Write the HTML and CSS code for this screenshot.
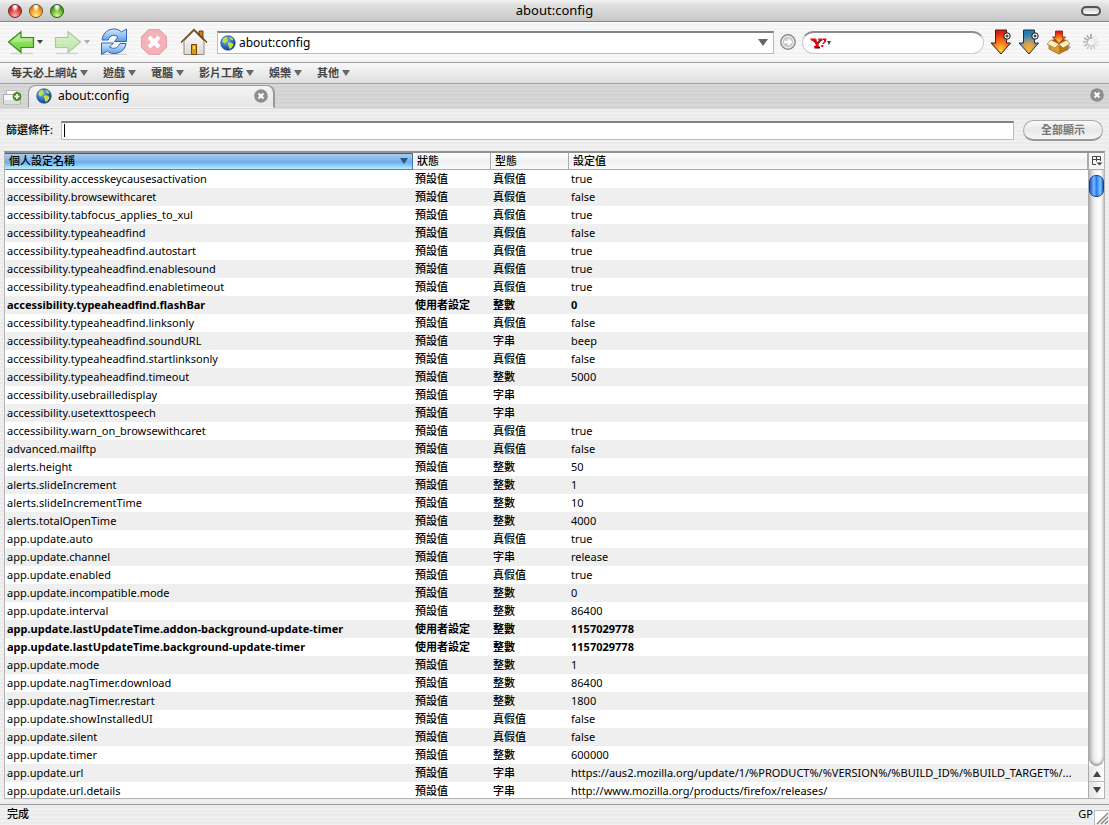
FILE: index.html
```html
<!DOCTYPE html>
<html lang="zh-Hant">
<head>
<meta charset="utf-8">
<title>about:config</title>
<link rel="stylesheet" href="styles.css">
</head>
<body>
<svg width="0" height="0" class="defs" aria-hidden="true">
  <defs>
    <radialGradient id="sea" cx=".35" cy=".3" r=".8"><stop offset="0" stop-color="#8cbcf0"/><stop offset=".5" stop-color="#2f74c8"/><stop offset="1" stop-color="#0a2f78"/></radialGradient>
    <linearGradient id="green" x2="0" y2="1"><stop offset="0" stop-color="#b2f084"/><stop offset="1" stop-color="#68d038"/></linearGradient>
    <linearGradient id="blue" x2="0" y2="1"><stop offset="0" stop-color="#d4ebfc"/><stop offset="1" stop-color="#5a9be8"/></linearGradient>
    <radialGradient id="fire" cx=".5" cy=".85" r=".75"><stop offset="0" stop-color="#ffd43c"/><stop offset=".5" stop-color="#f8741c"/><stop offset="1" stop-color="#d81f10"/></radialGradient>
    <radialGradient id="ice" cx=".5" cy=".85" r=".75"><stop offset="0" stop-color="#ffb52c"/><stop offset=".4" stop-color="#d8a050"/><stop offset=".8" stop-color="#3b86b4"/><stop offset="1" stop-color="#2878ac"/></radialGradient>
    <linearGradient id="wall" x2="0" y2="1"><stop offset="0" stop-color="#fff"/><stop offset="1" stop-color="#ddd8d2"/></linearGradient>
    <symbol id="globe" viewBox="0 0 16 16">
      <circle cx="8" cy="8" r="7.300" fill="url(#sea)" stroke="#2a5690" stroke-width=".7"/>
      <path d="M3 3.500 5.500 2l2 .5L7 4.500 8 6 6 7 5 8.500 2.500 7zM9 2l3 .8 1.500 2.200-1.500.5-1.500-1zM7.500 8l2.500-.8 3 1.300.5 1.500-2 3-2 1-1-3z" fill="#bfe23c"/>
    </symbol>
    <symbol id="close" viewBox="0 0 14 14"><circle cx="7" cy="7" r="6.800" fill="#8e8e8e"/><path d="M4.500 4.500l5 5m0-5l-5 5" stroke="#fff" stroke-width="2"/></symbol>
    <symbol id="plus" viewBox="0 0 8 8"><circle cx="4" cy="4" r="3.200" fill="#fff" stroke="#111"/><path d="M4 2.500v3M2.500 4h3" stroke="#111"/></symbol>
  </defs>
</svg>

<header class="titlebar">
  <div class="lights"><button class="light red" aria-label="Close"></button><button class="light amber" aria-label="Minimize"></button><button class="light lime" aria-label="Zoom"></button></div>
  <h1>about:config</h1>
  <button class="pill" aria-label="Toggle toolbar"></button>
</header>

<nav class="toolbar">
  <button class="tool back" aria-label="Back"><svg width="28" height="26" viewBox="0 0 28 26"><path d="M4 24.500h22" stroke="#d4d4d4" stroke-width="1.500"/><path d="M1.500 13 14 2.700v5.800h12.500v10H14v5z" fill="url(#green)" stroke="#3a8c1c" stroke-width="1.200"/><path d="M4 13l9-7.500v4h12v3z" fill="#fff" opacity=".25"/></svg><i class="tri small"></i></button>
  <button class="tool forward" aria-label="Forward"><svg width="28" height="26" viewBox="0 0 28 26"><path d="M2 24.500h22" stroke="#aaa" stroke-width="1.500"/><path d="M26.500 13 14 2.700v5.800H1.500v10H14v5z" fill="url(#green)" stroke="#3a8c1c" stroke-width="1.200"/></svg><i class="tri small"></i></button>
  <button class="tool reload" aria-label="Reload"><svg width="28" height="28" viewBox="0 0 28 28"><path d="M2 26.500h25" stroke="#ccc"/><path d="M2 12C3 4 9 1 14 1c3 0 5.500 1 7.500 3L26.500 1v12.500H14.500L18 9c-4-3-8-2-10 3z" fill="url(#blue)" stroke="#2f66b4"/><path d="M26 15.500c-1 7-6.500 10-12 10-3 0-5-1-6.500-2.500L1.500 26.500V15H13.500L9.500 19c4 2.500 8 1.500 10.500-3.500z" fill="url(#blue)" stroke="#2f66b4"/></svg></button>
  <button class="tool stop" aria-label="Stop"><svg width="28" height="28" viewBox="0 0 28 28"><path d="M9 1.500h10l7.500 7.500v10L19 26.500H9L1.500 19V9z" fill="#f5b2b6" stroke="#e8a4aa" stroke-width="1.200"/><path d="M9 9l10 10M19 9 9 19" stroke="#fff" stroke-width="4"/></svg></button>
  <button class="tool home" aria-label="Home"><svg width="28" height="28" viewBox="0 0 28 28"><path d="M19 3h4v9l-4-4z" fill="#c98a13" stroke="#6b3d08"/><path d="M4 13 14 3l10 10v13.500H4z" fill="url(#wall)" stroke="#94877a"/><path d="M1 14.500 14 1.500l13 13" fill="none" stroke="#6b4210" stroke-width="1.300"/><path d="M11.500 26.500v-10h5v10z" fill="#d99a20" stroke="#754406"/><path d="M13 18h2v3h-2z" fill="#ffe13c"/></svg></button>
  <div class="field address"><svg width="16" height="16"><use href="#globe"/></svg><input type="text" value="about:config" aria-label="Address"><button class="drop" aria-label="History"><i class="tri large"></i></button></div>
  <button class="tool go" aria-label="Go"><svg width="16" height="16" viewBox="0 0 16 16"><circle cx="8" cy="8" r="7.300" fill="#ccc" stroke="#858585" stroke-width="1.200"/><circle cx="8" cy="8" r="5.800" fill="none" stroke="#eee"/><path d="M4 6.700h4V4.200L12.500 8 8 11.800V9.300H4z" fill="#fff"/></svg></button>
  <div class="search">
    <button class="engine" aria-label="Yahoo"><svg width="17" height="12" viewBox="0 0 17 12"><path d="M1 2.500h6v1H5.700L8 5.800 10 3.500H8.500v-1h4v1h-1L8.500 7v3H10v1.500H4.500V10H6V7L2.500 3.500H1z" fill="#500"/><path d="M0 1.500h6v1H4.800L7.300 5 9.500 2.500H8v-1h4v1h-1L8 6v3h1.500v1H4V9h1.500V6L1.500 2.500H0z" fill="#f00012"/><path d="M11 4l2-2.500h3.500L16 4.500 13.500 7h-1.300L14 4.500V3h-1.500zM11.500 8h2l-.5 2h-2z" fill="#e80012"/></svg><i class="tri tiny"></i></button>
    <input type="text" aria-label="Search">
  </div>
  <div class="extras">
    <button class="tool" aria-label="Download"><svg width="22" height="26" viewBox="0 0 22 26"><path d="M5.500 1h11v13h4L11 25 1 14h4.500z" fill="url(#fire)" stroke="#4a1610"/><use href="#plus" x="13" y="3" width="8" height="8"/></svg></button>
    <button class="tool" aria-label="Download all"><svg width="22" height="26" viewBox="0 0 22 26"><path d="M5.500 1h11v13h4L11 25 1 14h4.500z" fill="url(#ice)" stroke="#103448"/><use href="#plus" x="13" y="3" width="8" height="8"/></svg></button>
    <button class="tool" aria-label="Downloads"><svg width="26" height="26" viewBox="0 0 26 26"><path d="M8 24l13-2 4-4-4-3z" fill="#aaa"/><path d="M3 14l10 3 9-3v6l-9 5-10-5z" fill="#dc9b32" stroke="#946018" stroke-width=".8"/><path d="M13 17l9-3v6l-9 5z" fill="#b97618"/><path d="M5 11l8-2 8 2-8 4z" fill="#8e581a"/><path d="M5 11l8 4-4 4-8-4zM21 11l-8 4 4 4 7-4z" fill="#fff0bd" stroke="#a8752e" stroke-width=".7"/><path d="M9.500 2h7v6h3L13 14.500 6.500 8h3z" fill="url(#fire)" stroke="#8a1a0a" stroke-width=".8"/></svg></button>
    <svg class="throbber" width="16" height="16" viewBox="0 0 16 16" stroke-width="1.500" stroke="#999"><path d="M8 0v5"/><path d="M4 1.100l2.500 4.300M1.100 4l4.300 2.500" stroke="#aaa"/><path d="M0 8h5M1.100 12l4.300-2.500" stroke="#b8b8b8"/><path d="M4 14.900l2.500-4.300M8 16v-5M12 14.900 9.500 10.600" stroke="#c8c8c8"/><path d="M14.900 12l-4.300-2.500M16 8h-5" stroke="#dedede"/><path d="M14.900 4l-4.300 2.500M12 1.100 9.500 5.400" stroke="#e6e6e6"/></svg>
  </div>
</nav>

<nav class="bookmarks">
  <button>每天必上網站<i class="tri"></i></button><button>遊戲<i class="tri"></i></button><button>電腦<i class="tri"></i></button><button>影片工廠<i class="tri"></i></button><button>娛樂<i class="tri"></i></button><button>其他<i class="tri"></i></button>
</nav>

<div class="tabs">
  <button class="newtab" aria-label="New tab"><svg width="20" height="17" viewBox="0 0 20 17"><path d="M3.500 6V2.500h10V6" fill="#fff" stroke="#bbb"/><path d="M.5 16V6.500h17V16z" fill="#f6f6f6" stroke="#aaa"/><path d="M1 12h16v4H1z" fill="#ddd"/><circle cx="14" cy="8.500" r="4" fill="#4d9c28" stroke="#2d6a16" stroke-width=".7"/><path d="M14 6v5M11.500 8.500h5" stroke="#fff" stroke-width="1.500"/></svg></button>
  <div class="tab"><svg width="16" height="16"><use href="#globe"/></svg><span>about:config</span><button aria-label="Close tab"><svg width="14" height="14"><use href="#close"/></svg></button></div>
  <button class="closeall" aria-label="Close"><svg width="14" height="14"><use href="#close"/></svg></button>
</div>

<main class="config">
  <form class="filter">
    <label for="filter">篩選條件:</label>
    <div class="field filterbox"><i class="caret"></i><input id="filter" type="text"></div>
    <button type="button" class="showall">全部顯示</button>
  </form>
  <div class="tree">
    <div class="rows">
    <table>
      <colgroup><col class="name"><col class="short"><col class="short"><col></colgroup>
      <thead><tr><th class="sorted"><span>個人設定名稱<i class="tri"></i></span></th><th>狀態</th><th>型態</th><th>設定值</th></tr></thead>
      <tbody>
        <tr><td>accessibility.accesskeycausesactivation</td><td>預設值</td><td>真假值</td><td>true</td></tr>
        <tr><td>accessibility.browsewithcaret</td><td>預設值</td><td>真假值</td><td>false</td></tr>
        <tr><td>accessibility.tabfocus_applies_to_xul</td><td>預設值</td><td>真假值</td><td>true</td></tr>
        <tr><td>accessibility.typeaheadfind</td><td>預設值</td><td>真假值</td><td>false</td></tr>
        <tr><td>accessibility.typeaheadfind.autostart</td><td>預設值</td><td>真假值</td><td>true</td></tr>
        <tr><td>accessibility.typeaheadfind.enablesound</td><td>預設值</td><td>真假值</td><td>true</td></tr>
        <tr><td>accessibility.typeaheadfind.enabletimeout</td><td>預設值</td><td>真假值</td><td>true</td></tr>
        <tr class="user"><td>accessibility.typeaheadfind.flashBar</td><td>使用者設定</td><td>整數</td><td>0</td></tr>
        <tr><td>accessibility.typeaheadfind.linksonly</td><td>預設值</td><td>真假值</td><td>false</td></tr>
        <tr><td>accessibility.typeaheadfind.soundURL</td><td>預設值</td><td>字串</td><td>beep</td></tr>
        <tr><td>accessibility.typeaheadfind.startlinksonly</td><td>預設值</td><td>真假值</td><td>false</td></tr>
        <tr><td>accessibility.typeaheadfind.timeout</td><td>預設值</td><td>整數</td><td>5000</td></tr>
        <tr><td>accessibility.usebrailledisplay</td><td>預設值</td><td>字串</td><td></td></tr>
        <tr><td>accessibility.usetexttospeech</td><td>預設值</td><td>字串</td><td></td></tr>
        <tr><td>accessibility.warn_on_browsewithcaret</td><td>預設值</td><td>真假值</td><td>true</td></tr>
        <tr><td>advanced.mailftp</td><td>預設值</td><td>真假值</td><td>false</td></tr>
        <tr><td>alerts.height</td><td>預設值</td><td>整數</td><td>50</td></tr>
        <tr><td>alerts.slideIncrement</td><td>預設值</td><td>整數</td><td>1</td></tr>
        <tr><td>alerts.slideIncrementTime</td><td>預設值</td><td>整數</td><td>10</td></tr>
        <tr><td>alerts.totalOpenTime</td><td>預設值</td><td>整數</td><td>4000</td></tr>
        <tr><td>app.update.auto</td><td>預設值</td><td>真假值</td><td>true</td></tr>
        <tr><td>app.update.channel</td><td>預設值</td><td>字串</td><td>release</td></tr>
        <tr><td>app.update.enabled</td><td>預設值</td><td>真假值</td><td>true</td></tr>
        <tr><td>app.update.incompatible.mode</td><td>預設值</td><td>整數</td><td>0</td></tr>
        <tr><td>app.update.interval</td><td>預設值</td><td>整數</td><td>86400</td></tr>
        <tr class="user"><td>app.update.lastUpdateTime.addon-background-update-timer</td><td>使用者設定</td><td>整數</td><td>1157029778</td></tr>
        <tr class="user"><td>app.update.lastUpdateTime.background-update-timer</td><td>使用者設定</td><td>整數</td><td>1157029778</td></tr>
        <tr><td>app.update.mode</td><td>預設值</td><td>整數</td><td>1</td></tr>
        <tr><td>app.update.nagTimer.download</td><td>預設值</td><td>整數</td><td>86400</td></tr>
        <tr><td>app.update.nagTimer.restart</td><td>預設值</td><td>整數</td><td>1800</td></tr>
        <tr><td>app.update.showInstalledUI</td><td>預設值</td><td>真假值</td><td>false</td></tr>
        <tr><td>app.update.silent</td><td>預設值</td><td>真假值</td><td>false</td></tr>
        <tr><td>app.update.timer</td><td>預設值</td><td>整數</td><td>600000</td></tr>
        <tr><td>app.update.url</td><td>預設值</td><td>字串</td><td>https://aus2.mozilla.org/update/1/%PRODUCT%/%VERSION%/%BUILD_ID%/%BUILD_TARGET%/...</td></tr>
        <tr><td>app.update.url.details</td><td>預設值</td><td>字串</td><td>http://www.mozilla.org/products/firefox/releases/</td></tr>
      </tbody>
    </table>
    </div>
    <div class="side">
      <button class="picker" aria-label="Choose columns"><svg width="12" height="12" viewBox="0 0 12 12"><path d="M5 9.500H1.500v-8h8V6M1.500 4.500h8M5.500 1.500v5" fill="none" stroke="#444"/><path d="M5.500 7.500h6l-3 3z" fill="#444"/></svg></button>
      <div class="track"><div class="thumb"></div></div>
      <button class="arrow" aria-label="Scroll up"><i class="tri up"></i></button>
      <button class="arrow" aria-label="Scroll down"><i class="tri down"></i></button>
    </div>
  </div>
</main>

<footer class="status"><span>完成</span><span class="gp">GP</span><svg width="15" height="15" viewBox="0 0 15 15"><path d="M.5 15V.5H15" fill="#fff" stroke="#bbb"/><path d="M3 14 14 3M7 14l7-7M11 14l3-3" stroke="#888" stroke-width="1.300"/></svg></footer>
</body>
</html>
```
FILE: styles.css
```css
* { box-sizing: border-box; }

body {
  margin: 0;
  height: 100vh;
  display: flex;
  flex-direction: column;
  overflow: hidden;
  font: 11px/18px "Noto Sans", "Noto Sans CJK TC", sans-serif;
  color: #000;
  background: repeating-linear-gradient(#f0f0f0 0 2px, #ebebeb 2px 4px);
}

button {
  margin: 0;
  padding: 0;
  border: 0;
  background: none;
  font: inherit;
  color: inherit;
  display: flex;
  align-items: center;
}

input {
  flex: 1;
  min-width: 0;
  padding: 0;
  border: 0;
  outline: 0;
  background: none;
  font: inherit;
}

svg { display: block; flex: none; }
.defs { position: absolute; }

.tri {
  flex: none;
  border: 4px solid transparent;
  border-top: 6px solid #666;
  border-bottom: 0;
}
.tri.small { border-width: 4px 3px 0; border-top-color: #444; }
.tri.tiny { border-width: 4px 2px 0; border-top-color: #444; }
.tri.large { border-width: 7px 5px 0; }
.tri.down { border-top-color: #444; }
.tri.up { border-top: 0; border-bottom: 6px solid #444; }

.titlebar {
  flex: none;
  height: 22px;
  padding: 0 8px;
  display: grid;
  grid-template-columns: 1fr auto 1fr;
  align-items: center;
  border-bottom: 1px solid #888;
  border-radius: 6px 6px 0 0;
  background: linear-gradient(#f2f2f2, #e2e2e2 20%, #c6c6c6);
}
.titlebar h1 { margin: 0; padding-bottom: 2px; font-size: 13px; line-height: 18px; font-weight: 400; }
.lights { display: flex; gap: 7px; }
.light {
  width: 14px;
  height: 14px;
  border-radius: 50%;
  border: 1px solid #444;
}
.red { border-color: #6e2420; background: radial-gradient(ellipse at 50% 10%, #fff 0 12%, transparent 40%), radial-gradient(circle at 50% 90%, #ffb8ac, #d8403c 50%, #93201c); }
.amber { border-color: #84501c; background: radial-gradient(ellipse at 50% 10%, #fff 0 12%, transparent 40%), radial-gradient(circle at 50% 90%, #fff090, #f5a128 50%, #a85c10); }
.lime { border-color: #2c5818; background: radial-gradient(ellipse at 50% 10%, #fff 0 12%, transparent 40%), radial-gradient(circle at 50% 90%, #d4ff98, #66b52c 50%, #2a6c10); }
.pill {
  justify-self: end;
  width: 20px;
  height: 10px;
  border: 2px solid #555;
  border-radius: 5px;
  background: linear-gradient(#ccc, #fff);
}

.toolbar {
  flex: none;
  height: 41px;
  padding: 0 10px 0 7px;
  display: flex;
  align-items: center;
  border-bottom: 1px solid #a0a0a0;
  background: repeating-linear-gradient(#f8f8f8 0 2px, #f3f3f3 2px 4px);
}
.back { gap: 2px; margin-right: 11px; }
.forward { gap: 2px; margin-right: 10px; opacity: .4; }
.reload, .stop { margin-right: 12px; }
.home { margin-right: 9px; }
.field {
  display: flex;
  align-items: center;
  background: #fff;
  border: 1px solid #bbb;
  border-top: 2px solid #828282;
}
.address { flex: 1; height: 23px; padding: 0 4px 0 2px; gap: 3px; font-size: 12px; }
.drop { padding: 0 1px; }
.go { margin: 0 6px; }
.search {
  width: 182px;
  height: 23px;
  padding: 0 7px;
  display: flex;
  align-items: center;
  border: 1px solid #ccc;
  border-top: 2px solid #8c8c8c;
  border-radius: 12px;
  background: #fff;
}
.extras { display: flex; align-items: center; gap: 6px; margin-left: 6px; }
.throbber { margin-left: 5px; }

.bookmarks {
  flex: none;
  height: 21px;
  padding: 0 11px;
  display: flex;
  gap: 15px;
  color: #444;
  font-weight: 700;
  border-bottom: 1px solid #a0a0a0;
  background: linear-gradient(#f8f8f8, #dedede);
}
.bookmarks button { gap: 3px; }

.tabs {
  flex: none;
  height: 25px;
  padding: 0 5px 0 3px;
  display: flex;
  align-items: flex-start;
  background: repeating-linear-gradient(#d7d7d7 0 2px, #d2d2d2 2px 4px);
}
.newtab { margin-top: 4px; }
.tab {
  width: 247px;
  height: 23px;
  margin: 1px 0 0 5px;
  padding: 0 5px 2px 7px;
  display: flex;
  align-items: center;
  gap: 6px;
  font-size: 12px;
  border: 1px solid #999;
  border-right-width: 2px;
  border-bottom-color: #f8f8f8;
  border-radius: 8px 8px 0 0;
  background: linear-gradient(#f4f4f4, #e6e6e6);
}
.tab span { flex: 1; }
.closeall { margin: 4px 0 0 auto; }

.config {
  flex: 1;
  min-height: 0;
  padding: 0 4px 5px;
  display: flex;
  flex-direction: column;
}
.filter {
  flex: none;
  height: 42px;
  margin: 0;
  padding: 0 2px;
  display: flex;
  align-items: center;
}
.filter label { width: 55px; font-weight: 500; }
.filterbox { flex: 1; height: 19px; padding-left: 2px; }
.caret { width: 1px; height: 13px; background: #000; }
.showall {
  width: 80px;
  height: 21px;
  margin-left: 9px;
  justify-content: center;
  color: #777;
  font-weight: 700;
  border: 1px solid #aaa;
  border-bottom: 2px solid #999;
  border-radius: 11px;
  background: linear-gradient(#fafafa, #e8e8e8 50%, #f6f6f6);
}

.tree {
  flex: 1;
  min-height: 0;
  display: flex;
  border: 1px solid #b4b4b4;
  border-top: 2px solid #929292;
  background: #fff;
}
.rows { flex: 1; min-width: 0; overflow: hidden; }
table { width: 100%; table-layout: fixed; border-collapse: separate; border-spacing: 0; }
.name { width: 408px; }
.short { width: 78px; }
th, td {
  height: 18px;
  padding: 0 2px;
  line-height: 16px;
  text-align: left;
  white-space: nowrap;
  overflow: hidden;
  text-overflow: ellipsis;
}
th {
  height: 17px;
  padding: 0 4px;
  font-weight: 500;
  border-right: 1px solid #aaa;
  border-bottom: 1px solid #aaa;
  background: linear-gradient(#fff, #f0f0f0 50%, #fafafa);
}
th.sorted {
  border-right-color: #3a78b8;
  border-bottom-color: #4c88c0;
  background: linear-gradient(#2a62b4 0 1px, #a8cdf2 1px, #7ab2ee 50%, #68a9ec 55%, #b4f0ff);
}
.sorted span { display: flex; align-items: center; justify-content: space-between; }
.sorted .tri { border-top-color: #2c5880; }
tbody tr:nth-child(even) { background: #efefef; }
td:nth-child(2), td:nth-child(3) { font-weight: 500; }
.user td { font-weight: 700; }

.side { flex: none; width: 16px; display: flex; flex-direction: column; border-left: 1px solid #aaa; }
.picker { flex: none; height: 17px; justify-content: center; border-bottom: 1px solid #aaa; background: #f6f6f6; }
.track {
  flex: 1;
  padding-top: 5px;
  border-radius: 0 0 8px 8px;
  box-shadow: inset 0 -2px 3px #999;
  background: linear-gradient(90deg, #bbb, #eee 35%, #fff 70%, #e4e4e4);
}
.thumb {
  height: 22px;
  border: 1px solid #123f98;
  border-radius: 7px;
  background: linear-gradient(90deg, #1d55c8, #80b8fa 30%, #2d7ce8 50%, #78c6ff 80%, #2060c0);
}
.arrow { flex: none; height: 16px; justify-content: center; border-bottom: 1px solid #bbb; background: linear-gradient(90deg, #e4e4e4, #fff); }
.arrow:last-child { border-bottom: 0; }

.status {
  flex: none;
  height: 21px;
  padding: 0 0 0 7px;
  display: flex;
  align-items: center;
  font-weight: 500;
  border-top: 1px solid #999;
}
.status span { padding-bottom: 2px; }
.status .gp { margin-left: auto; padding-right: 1px; font-weight: 400; }
.status svg { align-self: flex-end; }
```
